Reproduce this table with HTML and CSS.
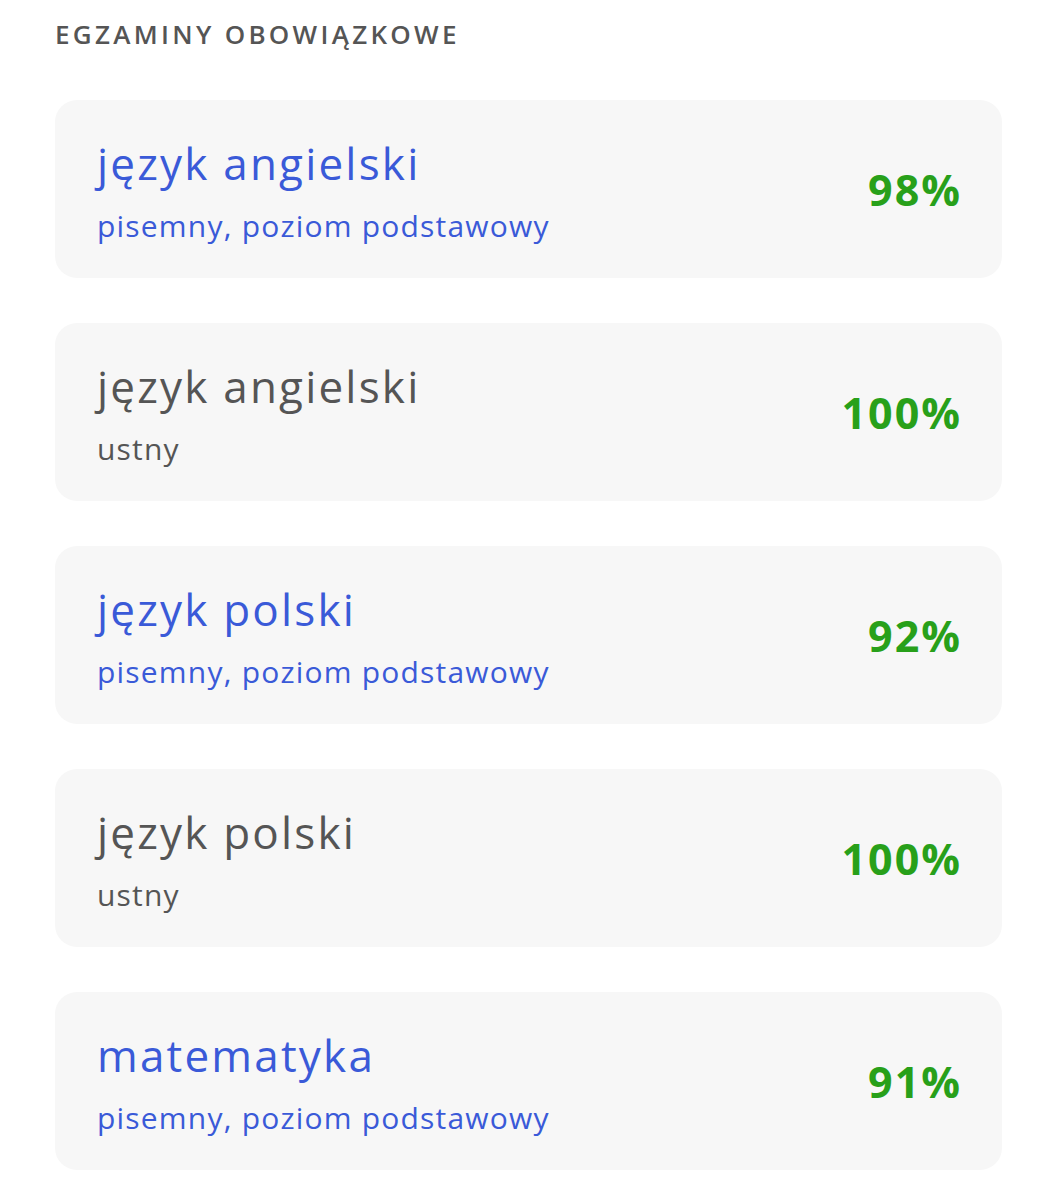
FILE: index.html
```html
<!DOCTYPE html>
<html lang="pl">
<head>
<meta charset="utf-8">
<link rel="stylesheet" href="styles.css">
</head>
<body>
<section class="exams">
  <h2 class="heading">EGZAMINY OBOWIĄZKOWE</h2>
  <div class="list">
    <div class="card">
      <div class="info link">
        <div class="title">język angielski</div>
        <div class="sub">pisemny, poziom podstawowy</div>
      </div>
      <div class="score">98%</div>
    </div>
    <div class="card">
      <div class="info">
        <div class="title">język angielski</div>
        <div class="sub">ustny</div>
      </div>
      <div class="score">100%</div>
    </div>
    <div class="card">
      <div class="info link">
        <div class="title">język polski</div>
        <div class="sub">pisemny, poziom podstawowy</div>
      </div>
      <div class="score">92%</div>
    </div>
    <div class="card">
      <div class="info">
        <div class="title">język polski</div>
        <div class="sub">ustny</div>
      </div>
      <div class="score">100%</div>
    </div>
    <div class="card">
      <div class="info link">
        <div class="title">matematyka</div>
        <div class="sub">pisemny, poziom podstawowy</div>
      </div>
      <div class="score">91%</div>
    </div>
  </div>
</section>
</body>
</html>
```
FILE: styles.css
```css
html, body {
  margin: 0;
  padding: 0;
  background: #ffffff;
}
body {
  font-family: "Open Sans", "Noto Sans", sans-serif;
}
.exams {
  padding: 16px 55px 0 55px;
}
.heading {
  margin: 0;
  font-size: 26px;
  font-weight: 600;
  letter-spacing: 3.3px;
  color: #555555;
  line-height: 36px;
}
.list {
  margin-top: 48px;
  display: flex;
  flex-direction: column;
  gap: 45px;
}
.card {
  background: #f7f7f7;
  border-radius: 22px;
  height: 178px;
  box-sizing: border-box;
  padding: 35px 42px 0 42px;
  display: flex;
  align-items: flex-start;
  justify-content: space-between;
}
.info {
  display: flex;
  flex-direction: column;
  color: #555555;
}
.info.link {
  color: #3a5ad8;
}
.title {
  font-size: 44px;
  font-weight: 500;
  letter-spacing: 2.2px;
  line-height: 56px;
}
.sub {
  font-size: 30px;
  font-weight: 500;
  letter-spacing: 1.2px;
  line-height: 40px;
  margin-top: 15px;
}
.score {
  align-self: center;
  margin-top: -35px;
  font-size: 43px;
  font-weight: 700;
  letter-spacing: 2px;
  margin-right: -2px;
  color: #28a01a;
}
```
